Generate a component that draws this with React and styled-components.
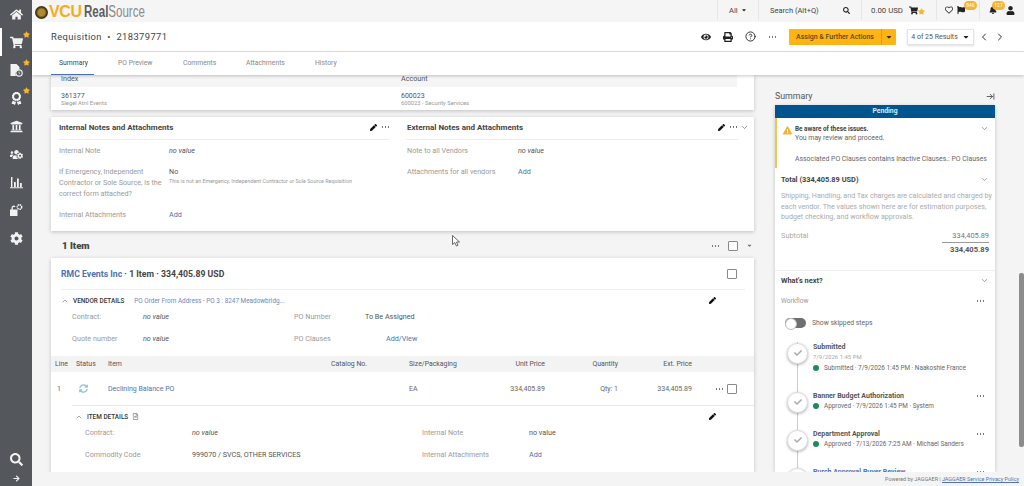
import React from "react";
import styled, { createGlobalStyle } from "styled-components";
import {
  FaHome, FaShoppingCart, FaUniversity, FaCog, FaSearch, FaPen, FaEye, FaPrint,
  FaFlag, FaBell, FaUser, FaStar, FaCaretDown, FaExclamationTriangle, FaCheck, FaUsersCog,
  FaAward, FaArrowRight, FaSyncAlt, FaRegHeart, FaRegFileAlt,
} from "react-icons/fa";
import { LuChevronDown, LuChevronUp, LuChevronLeft, LuChevronRight, LuArrowRightToLine, LuCircleHelp } from "react-icons/lu";

const Global = createGlobalStyle`
  html, body { margin: 0; padding: 0; background: #f4f4f4; }
  body { font-family: Roboto, "Liberation Sans", sans-serif; color: #444; }
  * { box-sizing: border-box; }
`;

const Page = styled.div`
  position: relative;
  width: 1024px;
  height: 486px;
  display: flex;
  overflow: hidden;
`;

const Sidebar = styled.nav`
  width: 32px;
  flex: none;
  background: #54575b;
  display: flex;
  flex-direction: column;
  align-items: center;
`;

const NavItem = styled.div`
  position: relative;
  width: 32px;
  height: 28px;
  display: flex;
  align-items: center;
  justify-content: center;
  color: #f2f2f2;
  font-size: 13px;
  border-left: ${(p) => (p.$active ? "2px solid #fff" : "2px solid transparent")};
  padding-right: 2px;
`;

const NavStar = styled(FaStar)`
  position: absolute;
  top: 3px;
  right: 2px;
  font-size: 7px;
  color: #f5b52e;
`;

const CartStar = styled(NavStar)`
  top: 8px;
  right: 11px;
  && { color: #f5b52e; }
`;

const NavBottom = styled.div`
  margin-top: auto;
  display: flex;
  flex-direction: column;
  align-items: center;
  gap: 9px;
  padding-bottom: 4px;
  color: #f2f2f2;
  font-size: 13px;
`;

const Main = styled.div`
  flex: 1;
  min-width: 0;
  display: flex;
  flex-direction: column;
`;

const TopBar = styled.header`
  height: 22px;
  flex: none;
  background: #f5f5f5;
  display: flex;
  align-items: flex-start;
  padding-left: 3px;
`;

const Logo = styled.div`
  height: 22px;
  display: flex;
  align-items: center;
  gap: 1px;
  padding-top: 2px;
  font-family: "Liberation Sans", sans-serif;
  font-size: 16px;
  color: #6b6b6b;
`;

const Vcu = styled.b`
  color: #f5ad1c;
  font-size: 16px;
  letter-spacing: -0.4px;
  margin-right: 1px;
`;

const RealSource = styled.span`
  display: inline-block;
  transform: scaleX(0.72);
  transform-origin: left center;
  color: #8b8b8b;
  b { color: #5c5c5c; }
`;

const Seal = styled.i`
  width: 13px;
  height: 13px;
  border-radius: 50%;
  background: radial-gradient(circle, #b08a2c 0 35%, #3c3112 60%);
`;

const TopRight = styled.div`
  margin-left: auto;
  height: 20px;
  display: flex;
  font-size: 7.5px;
  color: #555;
`;

const TopCell = styled.div`
  position: relative;
  width: ${(p) => p.$w}px;
  display: flex;
  align-items: center;
  justify-content: space-between;
  padding: 0 ${(p) => p.$pad ?? 8}px;
  border-left: 1px solid #e6e6e6;
  color: #444;
  svg { color: #222; }
`;

const Badge = styled.span`
  position: absolute;
  top: 1px;
  left: ${(p) => p.$left}px;
  width: 13px;
  height: 9px;
  border-radius: 5px;
  background: #f5b52e;
  color: #fff;
  font-size: 5px;
  line-height: 9px;
  text-align: center;
`;

const Header = styled.div`
  height: 30px;
  flex: none;
  background: #fff;
  border-bottom: 1px solid #e4e4e4;
  display: flex;
  align-items: center;
  padding: 0 18px 0 19px;
`;

const Title = styled.h1`
  margin: 0;
  font-size: 9.4px;
  font-weight: 400;
  letter-spacing: 0.4px;
  color: #444;
`;

const HeadTools = styled.div`
  margin-left: auto;
  display: flex;
  align-items: center;
  color: #222;
  font-size: 10px;
  gap: 12px;
`;

const Dots = styled.i`
  display: block;
  flex: none;
  width: 9px;
  height: 2px;
  background: radial-gradient(circle, ${(p) => p.$color || "#777"} 0.8px, transparent 1px) 0 0 / 3px 2px;
`;

const ActionBtn = styled.div`
  width: 107px;
  height: 16px;
  display: flex;
  background: #fdb414;
  color: #5a4a20;
  font-size: 7px;
  font-weight: 500;
  border-radius: 1px;
  align-items: center;
  span { flex: 1; text-align: center; }
`;

const BtnCaret = styled.i`
  width: 15px;
  height: 16px;
  border-left: 1px solid #e09c08;
  display: flex;
  align-items: center;
  justify-content: center;
  color: #333;
  font-size: 8px;
`;

const ResultBox = styled.div`
  width: 67px;
  height: 16px;
  margin-left: -1px;
  border: 1px solid #e4e4e4;
  box-shadow: 0 1px 2px rgba(0, 0, 0, 0.12);
  display: flex;
  align-items: center;
  justify-content: center;
  gap: 4px;
  font-size: 7px;
  color: #555;
  svg { color: #222; font-size: 8px; }
`;

const Chevs = styled.div`
  display: flex;
  gap: 4px;
  margin-left: -8px;
  font-size: 12px;
  color: #333;
`;

const Tabs = styled.div`
  height: 23px;
  flex: none;
  background: #fff;
  display: flex;
  padding-left: 19px;
  box-shadow: 0 1px 3px rgba(0, 0, 0, 0.22);
  position: relative;
  z-index: 2;
`;

const Tab = styled.div`
  width: ${(p) => p.$w}px;
  padding-left: ${(p) => p.$pad}px;
  font-size: 6.8px;
  line-height: 22px;
  color: ${(p) => (p.$active ? "#444" : "#888")};
  border-bottom: ${(p) => (p.$active ? "1px solid #4a6fb0" : "0")};
`;

const Body = styled.div`
  flex: 1;
  min-height: 0;
  display: flex;
  padding-left: 19px;
  overflow: hidden;
`;

const Left = styled.div`
  width: 703px;
  flex: none;
  display: flex;
  flex-direction: column;
`;

const Card = styled.section`
  background: #fff;
  flex: none;
  box-shadow: 0 1px 4px rgba(0, 0, 0, 0.22);
`;

const IndexHead = styled.div`
  height: 12px;
  width: 686px;
  background: #f5f5f5;
  display: grid;
  grid-template-columns: 340px 1fr;
  padding-left: 10px;
  font-size: 7.2px;
  line-height: 8px;
  color: #555;
`;

const IndexRow = styled.div`
  height: 23px;
  display: grid;
  grid-template-columns: 340px 1fr;
  padding: 5px 0 0 10px;
  font-size: 7px;
  line-height: 8px;
  color: #555;
  small { display: block; font-size: 5.8px; line-height: 7px; color: #999; }
`;

const NotesCard = styled(Card)`
  height: 114px;
  margin-top: 7px;
  display: grid;
  grid-template-columns: 348px 1fr;
  padding: 0 16px 0 7px;
  position: relative;
`;

const NoteCol = styled.div`
  padding-right: ${(p) => (p.$right ? 0 : 16)}px;
`;

const NoteHead = styled.div`
  height: 23px;
  padding: 0 0 2px 1px;
  border-bottom: 1px solid #eee;
  display: flex;
  align-items: center;
  font-size: 8px;
  font-weight: 700;
  color: #444;
  gap: 4px;
  svg { font-size: 7px; color: #111; }
  h3 { margin: 0 auto 0 0; font: inherit; }
`;

const NoteRows = styled.div`
  display: flex;
  flex-direction: column;
  padding: 5px 0 0 1px;
`;

const FieldRow = styled.div`
  display: grid;
  grid-template-columns: ${(p) => p.$label}px 1fr;
  min-height: ${(p) => p.$h || 21}px;
  font-size: 7.2px;
  line-height: 11px;
  color: #999;
`;

const Value = styled.div`
  color: #555;
  font-style: ${(p) => (p.$italic ? "italic" : "normal")};
  small { display: block; font-size: 5.4px; line-height: 8px; color: #999; font-style: normal; }
`;

const LinkText = styled.span`
  color: #4f72ad;
`;

const Collapse = styled(LuChevronDown)`
  position: absolute;
  top: 6px;
  right: 5px;
  font-size: 9px;
  color: #777;
`;

const ItemBar = styled.div`
  height: 27px;
  flex: none;
  display: flex;
  align-items: center;
  padding: 2px 1px 0 11px;
  font-size: 9.6px;
  font-weight: 700;
  color: #444;
  gap: 8px;
  b { margin-right: auto; }
  svg { font-size: 7px; color: #777; }
`;

const Check = styled.i`
  display: block;
  width: 10px;
  height: 10px;
  flex: none;
  border: 1px solid #8a8a8a;
  background: #fff;
  border-radius: 1px;
`;

const ItemCard = styled(Card)`
  flex: 1;
  min-height: 0;
  overflow: hidden;
`;

const VendorTitle = styled.div`
  margin: 0 9px 0 10px;
  height: 32px;
  border-bottom: 1px solid #eee;
  display: flex;
  align-items: center;
  justify-content: space-between;
  font-size: 8.7px;
  font-weight: 700;
  color: #444;
  padding-right: 8px;
`;

const SectionLine = styled.div`
  height: ${(p) => p.$h}px;
  display: flex;
  align-items: center;
  gap: 4px;
  padding: 0 38px 0 ${(p) => p.$left}px;
  font-size: 6.4px;
  font-weight: 500;
  color: #333;
  & > svg:first-child { font-size: 8px; color: #777; }
  a { font-size: 6.4px; font-weight: 400; margin-left: 6px; color: #6e88ba; }
`;

const EditPen = styled(FaPen)`
  margin-left: auto;
  font-size: 7px;
  color: #111;
`;

const DetailRows = styled.div`
  padding-left: ${(p) => p.$left}px;
  display: flex;
  flex-direction: column;
`;

const DetailRow = styled.div`
  height: 22px;
  display: grid;
  grid-template-columns: ${(p) => p.$cols};
  font-size: 7.2px;
  line-height: 11px;
  color: #999;
`;

const lineCols = "21px 32px 223px 78px 60px 76px 73px 74px 1fr";

const TableHead = styled.div`
  height: 16px;
  margin-top: 1px;
  background: #f3f3f3;
  display: grid;
  grid-template-columns: ${lineCols};
  padding-left: 4px;
  align-items: center;
  font-size: 6.9px;
  color: #555;
`;

const TableRow = styled.div`
  height: 33px;
  display: grid;
  grid-template-columns: ${lineCols};
  padding-left: 4px;
  align-items: center;
  font-size: 7px;
  color: #666;
  svg { font-size: 9px; color: #8ec3de; margin-left: 3px; }
`;

const Right = styled.div`
  text-align: right;
`;

const RowTools = styled.div`
  display: flex;
  align-items: center;
  gap: 3px;
  justify-content: flex-end;
  padding-right: 17px;
`;

const ItemDetails = styled.div`
  margin-left: 21px;
  border-top: 1px solid #e8e8e8;
`;

const SidePanel = styled.aside`
  width: 220px;
  margin-left: 21px;
  flex: none;
  display: flex;
  flex-direction: column;
  padding-top: 16px;
`;

const SideTitle = styled.div`
  height: 14px;
  flex: none;
  display: flex;
  justify-content: space-between;
  align-items: flex-start;
  font-size: 8.8px;
  color: #555;
  svg { font-size: 9px; color: #333; margin-top: 1px; }
`;

const SideCard = styled.div`
  flex: 1;
  min-height: 0;
  overflow: hidden;
  background: #fff;
  box-shadow: 0 1px 4px rgba(0, 0, 0, 0.2);
`;

const Status = styled.div`
  height: 13px;
  background: #00558f;
  color: #dfeaf2;
  font-size: 6.8px;
  font-weight: 700;
  line-height: 13px;
  text-align: center;
`;

const Warn = styled.div`
  position: relative;
  height: 50px;
  border-left: 2px solid #f0c64e;
  padding: 7px 0 0 18px;
  font-size: 6.9px;
  line-height: 9px;
  color: #666;
  b { display: block; color: #444; font-size: 6.4px; font-weight: 700; }
  p { margin: 12px 0 0; white-space: nowrap; }
`;

const WarnIcon = styled(FaExclamationTriangle)`
  position: absolute;
  left: 6px;
  top: 8px;
  font-size: 9px;
  color: #f0b429;
`;

const WarnFold = styled(LuChevronDown)`
  position: absolute;
  right: 6px;
  top: 6px;
  font-size: 9px;
  color: #888;
`;

const Fold = styled.div`
  display: flex;
  justify-content: space-between;
  align-items: center;
  margin: 0 6px;
  height: ${(p) => p.$h}px;
  font-size: 7.4px;
  font-weight: 700;
  color: #444;
  svg { font-size: 9px; color: #888; }
`;

const Notice = styled.p`
  margin: 1px 6px 0;
  font-size: 7.15px;
  line-height: 10.5px;
  color: #aaa;
  white-space: nowrap;
`;

const TotalRow = styled.div`
  display: flex;
  justify-content: space-between;
  margin: 8px 6px 0;
  font-size: 7.4px;
  color: #aaa;
  span:last-child { color: #777; }
`;

const GrandTotal = styled.div`
  margin: 2px 6px 0 auto;
  width: 47px;
  border-top: 1px solid #999;
  font-size: 7.6px;
  font-weight: 700;
  line-height: 13px;
  color: #555;
  text-align: right;
`;

const SideLine = styled.div`
  margin-top: 14px;
  border-top: 1px solid #eee;
`;

const WorkflowHead = styled.div`
  margin: 7px 10px 0 6px;
  display: flex;
  justify-content: space-between;
  align-items: center;
  font-size: 6.6px;
  color: #999;
`;

const ToggleRow = styled.div`
  margin: 13px 0 0 10px;
  height: 11px;
  display: flex;
  align-items: center;
  gap: 6px;
  font-size: 6.8px;
  color: #666;
`;

const Toggle = styled.i`
  position: relative;
  width: 21px;
  height: 10px;
  border-radius: 5px;
  background: #6f6f6f;
  &::before {
    content: "";
    position: absolute;
    left: 0;
    top: 0;
    width: 10px;
    height: 10px;
    border-radius: 50%;
    background: #fff;
    border: 1px solid #bbb;
  }
`;

const Steps = styled.div`
  padding-left: 38px;
  margin-top: 13px;
`;

const Step = styled.div`
  position: relative;
  height: ${(p) => p.$h}px;
  padding-right: 10px;
  font-size: 6.6px;
  line-height: 10.5px;
  color: #777;
  &::after {
    content: "";
    position: absolute;
    left: -16px;
    top: 0;
    bottom: -1px;
    width: 1px;
    background: #ccc;
  }
`;

const StepDisc = styled.i`
  position: absolute;
  z-index: 1;
  left: -26px;
  top: 1px;
  width: 21px;
  height: 21px;
  border-radius: 50%;
  background: #fff;
  border: 1px solid #ddd;
  box-shadow: 0 1px 3px rgba(0, 0, 0, 0.3);
  display: flex;
  align-items: center;
  justify-content: center;
  color: #aaa;
  font-size: 8px;
`;

const StepName = styled.div`
  display: flex;
  justify-content: space-between;
  align-items: center;
  font-size: 7px;
  font-weight: 700;
  color: ${(p) => (p.$link ? "#4f72ad" : "#555")};
`;

const StepDate = styled.div`
  color: #aaa;
  font-size: 6px;
`;

const StepState = styled.div`
  display: flex;
  align-items: center;
  gap: 5px;
  font-size: 6.4px;
  color: #666;
  &::before {
    content: "";
    width: 6px;
    height: 6px;
    border-radius: 50%;
    background: #1f8a5b;
  }
`;

const Footer = styled.footer`
  height: 14px;
  flex: none;
  background: #f4f4f4;
  font-size: 5.4px;
  line-height: 14px;
  color: #777;
  text-align: right;
  padding-right: 5px;
  position: relative;
  z-index: 2;
  a { color: #4f72ad; text-decoration: underline; }
`;

const Scrollbar = styled.div`
  position: absolute;
  top: 273px;
  right: 0;
  width: 5px;
  height: 174px;
  background: #8c8c8c;
  border-radius: 2px;
`;

const Cursor = styled.svg`
  position: absolute;
  left: 452px;
  top: 235px;
  width: 8px;
  height: 12px;
`;

const FileClock = () => (
  <svg width="14" height="14" viewBox="0 0 14 14" fill="currentColor">
    <path d="M1.5 1h6l3 3v2.6a4 4 0 0 0-3.4 6.4H1.5z" />
    <circle cx="10" cy="10" r="3.2" fill="none" stroke="currentColor" strokeWidth="1.2" />
    <path d="M10 8.4v1.9l1.2.7" fill="none" stroke="currentColor" strokeWidth=".8" />
  </svg>
);

const Bars = () => (
  <svg width="13" height="13" viewBox="0 0 13 13" fill="currentColor">
    <path d="M1 1h1.4v10H1zM4 6h1.8v5H4zM7 2.500h1.800V11H7zM10 7h1.800v4H10zM0 11.300h13v1H0z" />
  </svg>
);

const LockGear = () => (
  <svg width="14" height="14" viewBox="0 0 14 14" fill="currentColor">
    <path d="M1 6.500h7.500V13H1zM2.500 6.500V5a2.400 2.400 0 0 1 4-1.800l-.8 1A1.200 1.200 0 0 0 3.800 5v1.500z" />
    <circle cx="10.500" cy="4" r="2.200" fill="none" stroke="currentColor" strokeWidth="1.500" strokeDasharray="1.400 .5" />
  </svg>
);

const NAV = [
  { icon: FaHome },
  { icon: FaShoppingCart, star: true, active: true },
  { icon: FileClock, star: true },
  { icon: FaAward, star: true },
  { icon: FaUniversity },
  { icon: FaUsersCog },
  { icon: Bars },
  { icon: LockGear },
  { icon: FaCog },
];

const STEPS = [
  { name: "Submitted", date: "7/9/2026 1:45 PM", state: "Submitted · 7/9/2026 1:45 PM · Naakoshie France", h: 49 },
  { name: "Banner Budget Authorization", state: "Approved · 7/9/2026 1:45 PM · System", h: 38, more: true },
  { name: "Department Approval", state: "Approved · 7/13/2026 7:25 AM · Michael Sanders", h: 38, more: true },
  { name: "Purch Approval Buyer Review", link: true, h: 30, more: true },
];

const App = () => (
  <>
    <Global />
    <Page>
      <Sidebar>
        {NAV.map((n, i) => (
          <NavItem key={i} $active={n.active}>
            <n.icon />
            {n.star && <NavStar />}
          </NavItem>
        ))}
        <NavBottom>
          <FaSearch />
          <FaArrowRight style={{ fontSize: 7 }} />
        </NavBottom>
      </Sidebar>
      <Main>
        <TopBar>
          <Logo>
            <Seal />
            <Vcu>VCU</Vcu>
            <RealSource>
              <b>Real</b>Source
            </RealSource>
          </Logo>
          <TopRight>
            <TopCell $w={41} $pad={11}>
              All <FaCaretDown style={{ fontSize: 6 }} />
            </TopCell>
            <TopCell $w={103} $pad={11}>
              Search (Alt+Q)
              <FaSearch style={{ fontSize: 7 }} />
            </TopCell>
            <TopCell $w={75} $pad={9}>
              <span style={{ fontSize: 7.8 }}>0.00 USD</span>
              <FaShoppingCart style={{ fontSize: 9, marginRight: 9 }} />
              <CartStar />
            </TopCell>
            <TopCell $w={43} $pad={8}>
              <FaRegHeart style={{ fontSize: 8 }} />
              <FaFlag style={{ fontSize: 8, marginRight: 6 }} />
              <Badge $left={27}>846</Badge>
            </TopCell>
            <TopCell $w={45} $pad={8}>
              <FaBell style={{ fontSize: 8, marginLeft: 1 }} />
              <FaUser style={{ fontSize: 9, marginRight: 1 }} />
              <Badge $left={12}>127</Badge>
            </TopCell>
          </TopRight>
        </TopBar>
        <Header>
          <Title>Requisition&nbsp; •&nbsp; 218379771</Title>
          <HeadTools>
            <FaEye />
            <FaPrint />
            <LuCircleHelp style={{ fontSize: 11 }} />
            <Dots />
            <ActionBtn>
              <span>Assign &amp; Further Actions</span>
              <BtnCaret>
                <FaCaretDown />
              </BtnCaret>
            </ActionBtn>
            <ResultBox>
              4 of 25 Results <FaCaretDown />
            </ResultBox>
            <Chevs>
              <LuChevronLeft />
              <LuChevronRight />
            </Chevs>
          </HeadTools>
        </Header>
        <Tabs>
          <Tab $active $w={43} $pad={8}>Summary</Tab>
          <Tab $w={67} $pad={24}>PO Preview</Tab>
          <Tab $w={63} $pad={22}>Comments</Tab>
          <Tab $w={67} $pad={22}>Attachments</Tab>
          <Tab $w={60} $pad={24}>History</Tab>
        </Tabs>
        <Body>
          <Left>
            <Card>
              <IndexHead>
                <span>Index</span>
                <span>Account</span>
              </IndexHead>
              <IndexRow>
                <div>
                  361377
                  <small>Siegel Atnl Events</small>
                </div>
                <div>
                  600023
                  <small>600023 - Security Services</small>
                </div>
              </IndexRow>
            </Card>
            <NotesCard>
              <NoteCol>
                <NoteHead>
                  <h3>Internal Notes and Attachments</h3>
                  <FaPen />
                  <Dots />
                </NoteHead>
                <NoteRows>
                  <FieldRow $label={110}>
                    Internal Note
                    <Value $italic>no value</Value>
                  </FieldRow>
                  <FieldRow $label={110} $h={43}>
                    <span>
                      If Emergency, Independent
                      <br />
                      Contractor or Sole Source, is the
                      <br />
                      correct form attached?
                    </span>
                    <Value>
                      No
                      <small>This is not an Emergency, Independent Contractor or Sole Source Requisition</small>
                    </Value>
                  </FieldRow>
                  <FieldRow $label={110}>
                    Internal Attachments
                    <LinkText>Add</LinkText>
                  </FieldRow>
                </NoteRows>
              </NoteCol>
              <NoteCol $right>
                <NoteHead>
                  <h3>External Notes and Attachments</h3>
                  <FaPen />
                  <Dots />
                </NoteHead>
                <NoteRows>
                  <FieldRow $label={111}>
                    Note to all Vendors
                    <Value $italic>no value</Value>
                  </FieldRow>
                  <FieldRow $label={111}>
                    Attachments for all vendors
                    <LinkText>Add</LinkText>
                  </FieldRow>
                </NoteRows>
              </NoteCol>
              <Collapse />
            </NotesCard>
            <ItemBar>
              <b>1 Item</b>
              <Dots />
              <Check />
              <FaCaretDown />
            </ItemBar>
            <ItemCard>
              <VendorTitle>
                <span>
                  <LinkText>RMC Events Inc</LinkText> · 1 Item · 334,405.89 USD
                </span>
                <Check />
              </VendorTitle>
              <SectionLine $h={21} $left={10}>
                <LuChevronUp />
                VENDOR DETAILS
                <a>PO Order From Address - PO 3 : 8247 Meadowbridg...</a>
                <EditPen />
              </SectionLine>
              <DetailRows $left={21}>
                <DetailRow $cols="71px 151px 71px 1fr">
                  Contract:
                  <Value $italic>no value</Value>
                  PO Number
                  <Value>To Be Assigned</Value>
                </DetailRow>
                <DetailRow $cols="71px 151px 92px 1fr">
                  Quote number
                  <Value $italic>no value</Value>
                  PO Clauses
                  <LinkText>Add/View</LinkText>
                </DetailRow>
              </DetailRows>
              <TableHead>
                <span>Line</span>
                <span>Status</span>
                <span>Item</span>
                <span>Catalog No.</span>
                <span>Size/Packaging</span>
                <Right>Unit Price</Right>
                <Right>Quantity</Right>
                <Right>Ext. Price</Right>
              </TableHead>
              <TableRow>
                <span style={{ paddingLeft: 2 }}>1</span>
                <FaSyncAlt />
                <LinkText>Declining Balance PO</LinkText>
                <span />
                <span>EA</span>
                <Right>334,405.89</Right>
                <Right>Qty: 1</Right>
                <Right>334,405.89</Right>
                <RowTools>
                  <Dots />
                  <Check />
                </RowTools>
              </TableRow>
              <ItemDetails>
                <SectionLine $h={21} $left={3}>
                  <LuChevronUp />
                  ITEM DETAILS
                  <FaRegFileAlt style={{ fontSize: 7, color: "#888" }} />
                  <EditPen />
                </SectionLine>
                <DetailRows $left={13}>
                  <DetailRow $cols="107px 230px 107px 1fr">
                    Contract:
                    <Value $italic>no value</Value>
                    Internal Note
                    <Value>no value</Value>
                  </DetailRow>
                  <DetailRow $cols="107px 230px 107px 1fr">
                    Commodity Code
                    <Value>999070 / SVCS, OTHER SERVICES</Value>
                    Internal Attachments
                    <LinkText>Add</LinkText>
                  </DetailRow>
                </DetailRows>
              </ItemDetails>
            </ItemCard>
          </Left>
          <SidePanel>
            <SideTitle>
              Summary
              <LuArrowRightToLine />
            </SideTitle>
            <SideCard>
              <Status>Pending</Status>
              <Warn>
                <WarnIcon />
                <WarnFold />
                <b>Be aware of these issues.</b>
                You may review and proceed.
                <p>Associated PO Clauses contains Inactive Clauses.: PO Clauses</p>
              </Warn>
              <Fold $h={22}>
                Total (334,405.89 USD)
                <LuChevronDown />
              </Fold>
              <Notice>
                Shipping, Handling, and Tax charges are calculated and charged by
                <br />
                each vendor. The values shown here are for estimation purposes,
                <br />
                budget checking, and workflow approvals.
              </Notice>
              <TotalRow>
                <span>Subtotal</span>
                <span>334,405.89</span>
              </TotalRow>
              <GrandTotal>334,405.89</GrandTotal>
              <SideLine />
              <Fold $h={19}>
                What's next?
                <LuChevronDown />
              </Fold>
              <WorkflowHead>
                Workflow
                <Dots />
              </WorkflowHead>
              <ToggleRow>
                <Toggle />
                Show skipped steps
              </ToggleRow>
              <Steps>
                {STEPS.map((s) => (
                  <Step key={s.name} $h={s.h}>
                    <StepDisc>
                      <FaCheck />
                    </StepDisc>
                    <StepName $link={s.link}>
                      {s.name}
                      {s.more && <Dots />}
                    </StepName>
                    {s.date && <StepDate>{s.date}</StepDate>}
                    {s.state && <StepState>{s.state}</StepState>}
                  </Step>
                ))}
              </Steps>
            </SideCard>
          </SidePanel>
        </Body>
        <Footer>
          Powered by JAGGAER | <a>JAGGAER Service Privacy Policy</a>
        </Footer>
      </Main>
      <Scrollbar />
      <Cursor viewBox="0 0 8 12">
        <path d="M0.5 0.5 V9.5 L2.8 7.6 L4.4 11 L6 10.2 L4.5 7 H7.5 Z" fill="#fff" stroke="#444" strokeWidth="0.8" />
      </Cursor>
    </Page>
  </>
);

export default App;
